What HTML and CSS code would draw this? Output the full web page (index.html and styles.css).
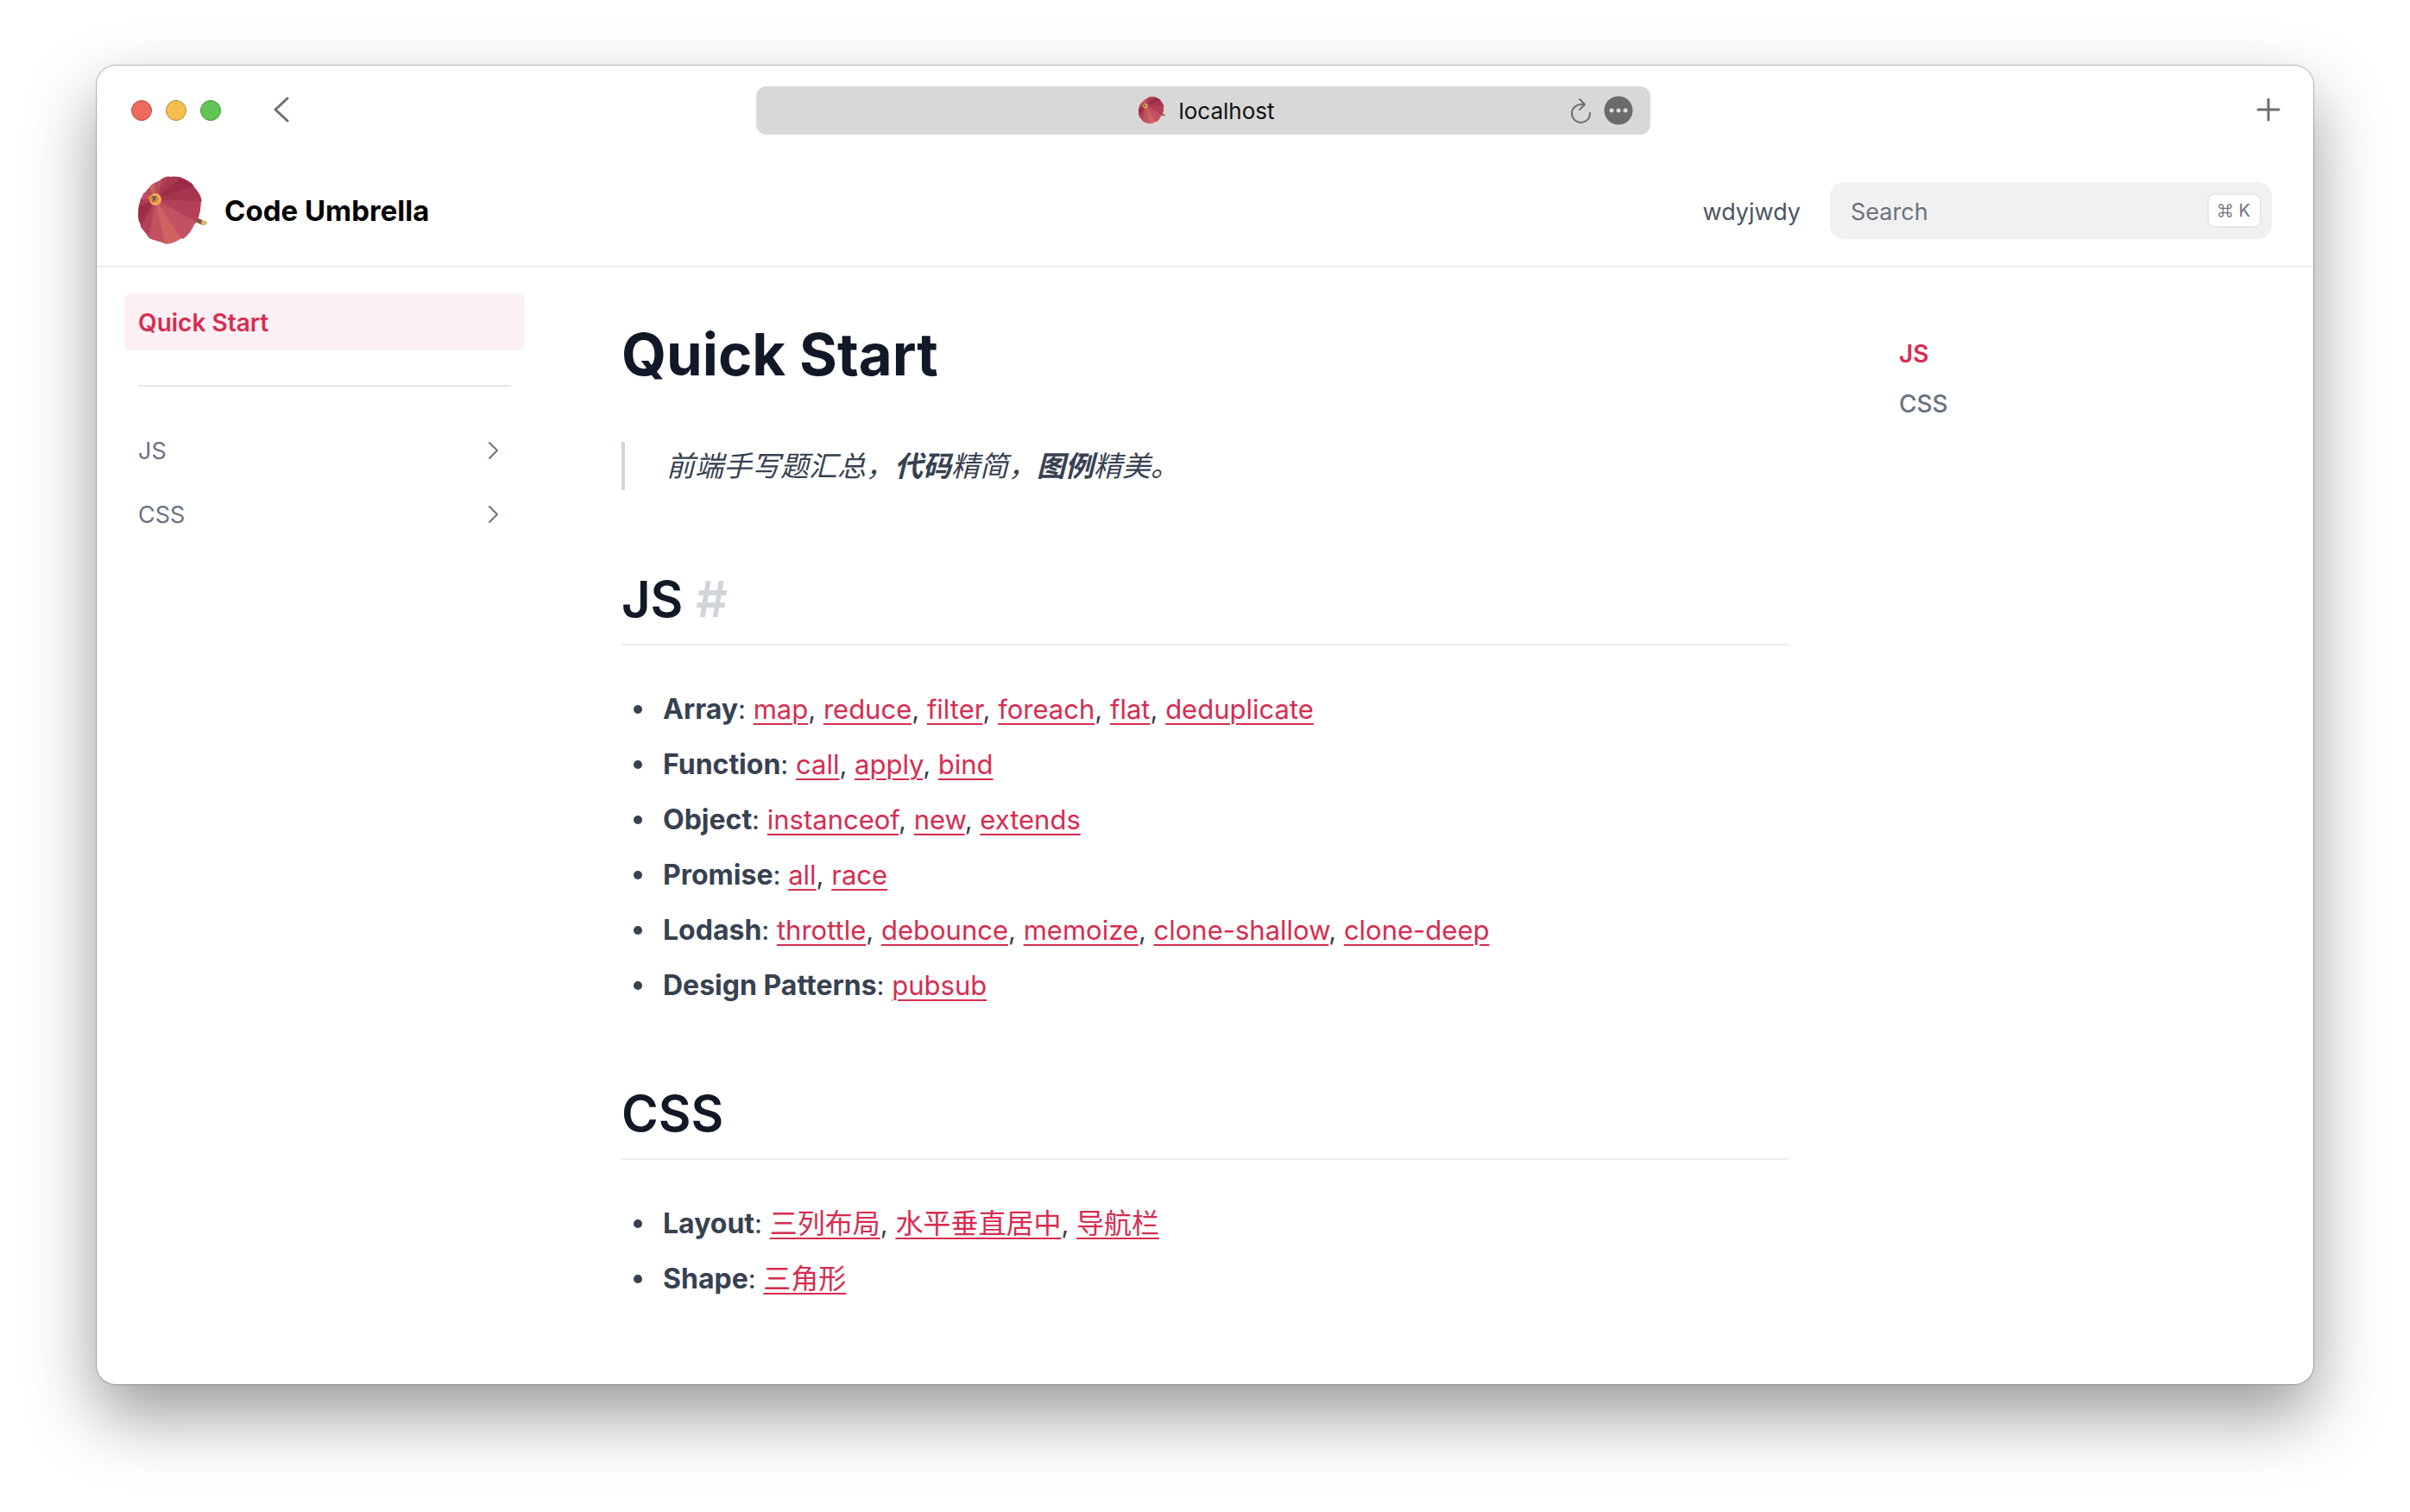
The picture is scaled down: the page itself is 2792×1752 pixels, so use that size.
FILE: index.html
```html
<!DOCTYPE html>
<html lang="en">
<head>
<meta charset="utf-8">
<meta name="viewport" content="width=device-width, initial-scale=1">
<title>Quick Start – Code Umbrella</title>
<link rel="stylesheet" href="styles.css">
</head>
<body>
<svg class="defs" aria-hidden="true">
  <symbol id="umbrella" viewBox="0 0 80 80">
    <path fill="#7b5640" d="M67 48l10 4-2 5-9-4z"/>
    <path fill="#d8bd67" d="M74 51l4 1q3 1 2 3t-3 2l-4-1z"/>
    <path fill="#b74a5c" d="M20 27L13 14 19 8 28 4 36 1 49 1 63 9 64 11 73 29 72 40 68 53 50 72 31 78 13 72 4 60 1 44 3 27 7 19z"/>
    <path fill="#c25162" d="M20 27L13 72q8 4 19 4z"/>
    <path fill="#d06262" d="M20 27l11 52q12-1 19-7z"/>
    <path fill="#c25162" d="M20 27l30 45 2 1q10-7 14-20l2-1z"/>
    <path fill="#b34056" d="M20 27l48 26q5-11 4-25z"/>
    <path fill="#a6364c" d="M20 27l54 2q-2-10-11-18z"/>
    <path fill="#9c2b48" d="M20 27l44-16q-6-7-16-9z"/>
    <path fill="#a8384e" d="M20 27L49 3l-1-2Q41 0 35 1z"/>
    <path fill="#b03f54" d="M20 27L36 0q-6 1-10 4z"/>
    <path fill="#bb4c5c" d="M20 27l8-23q-5 2-9 5z"/>
    <path fill="#cb6062" d="M20 27l-1-19q-5 2-7 7z"/>
    <path fill="#b74a5c" d="M20 27l-7-13-2 1-4 6z"/>
    <path fill="#c05063" d="M20 27L7 19l-2 5-3 4z"/>
    <path fill="#ae3c55" d="M20 27L3 27q-2 5-3 12z"/>
    <path fill="#9c2b48" d="M20 27L1 35q-2 10 0 18z"/>
    <path fill="#a3304b" d="M20 27L1 52l3 8z"/>
    <path fill="#b24056" d="M20 27L3 59q4 5 10 8z"/>
    <circle fill="#f0ad54" cx="20" cy="27" r="7"/>
    <circle fill="#de8a38" cx="20" cy="27" r="4"/>
    <path fill="#de8a38" d="M12 24q2-3 6-1l2 6q-5 3-8-2z"/>
    <path fill="#615d68" d="M16 23h5l-1 5-4 2q2-4 0-7z"/>
  </symbol>
  <symbol id="chevron" viewBox="0 0 24 24">
    <path d="M7 3l9 9-9 9" fill="none" stroke="currentColor" stroke-width="2" stroke-linecap="round" stroke-linejoin="round"/>
  </symbol>
</svg>

<div class="window">
  <div class="toolbar">
    <div class="toolbar-side">
      <div class="lights">
        <button class="light light-close" type="button" aria-label="Close"></button>
        <button class="light light-minimize" type="button" aria-label="Minimize"></button>
        <button class="light light-zoom" type="button" aria-label="Zoom"></button>
      </div>
      <button class="icon-button" type="button" aria-label="Back">
        <svg width="20" height="32" viewBox="0 0 20 32"><path d="M17 2L3 15l14 13" fill="none" stroke="currentColor" stroke-width="3" stroke-linecap="round" stroke-linejoin="round"/></svg>
      </button>
    </div>
    <div class="address">
      <div class="address-site">
        <svg width="32" height="32"><use href="#umbrella"/></svg>
        <span>localhost</span>
      </div>
      <div class="address-actions">
        <button class="icon-button" type="button" aria-label="Reload">
          <svg width="26" height="34" viewBox="0 0 26 34"><path d="M12 4l6 6-6 6M18 10h-4a10.500 10.500 0 1 0 10 10" fill="none" stroke="currentColor" stroke-width="2" stroke-linecap="round" stroke-linejoin="round"/></svg>
        </button>
        <button class="icon-button" type="button" aria-label="Page menu">
          <svg width="34" height="34" viewBox="0 0 34 34"><circle cx="17" cy="17" r="16.500" fill="#6b6b6b"/><g fill="#dcdcdc"><circle cx="9" cy="17" r="2.500"/><circle cx="17" cy="17" r="2.500"/><circle cx="25" cy="17" r="2.500"/></g></svg>
        </button>
      </div>
    </div>
    <div class="toolbar-side toolbar-end">
      <button class="icon-button" type="button" aria-label="New tab">
        <svg width="28" height="28" viewBox="0 0 28 28"><path d="M14 1v24M2 13h24" fill="none" stroke="currentColor" stroke-width="3" stroke-linecap="round"/></svg>
      </button>
    </div>
  </div>

  <header class="header">
    <a class="brand" href="#top">
      <svg width="80" height="80"><use href="#umbrella"/></svg>
      <span>Code Umbrella</span>
    </a>
    <a class="header-link" href="#author">wdyjwdy</a>
    <div class="search">
      <input class="search-input" type="search" placeholder="Search" aria-label="Search">
      <kbd class="search-key"><svg width="16" height="16" viewBox="0 0 18 18"><path d="M6 6h6v6H6zM6 6H4a2.500 2.500 0 1 1 2-2zM12 6V4a2.500 2.500 0 1 1 2 2zM12 12h2a2.500 2.500 0 1 1-2 2zM6 12v2a2.500 2.500 0 1 1-2-2z" fill="none" stroke="currentColor" stroke-width="1.500"/></svg>K</kbd>
    </div>
  </header>

  <div class="page">
    <nav class="sidebar" aria-label="Pages">
      <a class="side-link side-link-active" href="#top">Quick Start</a>
      <hr class="side-rule">
      <button class="side-link" type="button">JS<svg width="24" height="24"><use href="#chevron"/></svg></button>
      <button class="side-link" type="button">CSS<svg width="24" height="24"><use href="#chevron"/></svg></button>
    </nav>

    <main class="content" id="top">
      <h1>Quick Start</h1>
      <blockquote lang="zh-CN">前端手写题汇总，<strong>代码</strong>精简，<strong>图例</strong>精美。</blockquote>

      <h2 id="js">JS <a class="anchor" href="#js">#</a></h2>
      <ul>
        <li><strong>Array</strong>: <a href="#map">map</a>, <a href="#reduce">reduce</a>, <a href="#filter">filter</a>, <a href="#foreach">foreach</a>, <a href="#flat">flat</a>, <a href="#deduplicate">deduplicate</a></li>
        <li><strong>Function</strong>: <a href="#call">call</a>, <a href="#apply">apply</a>, <a href="#bind">bind</a></li>
        <li><strong>Object</strong>: <a href="#instanceof">instanceof</a>, <a href="#new">new</a>, <a href="#extends">extends</a></li>
        <li><strong>Promise</strong>: <a href="#all">all</a>, <a href="#race">race</a></li>
        <li><strong>Lodash</strong>: <a href="#throttle">throttle</a>, <a href="#debounce">debounce</a>, <a href="#memoize">memoize</a>, <a href="#clone-shallow">clone-shallow</a>, <a href="#clone-deep">clone-deep</a></li>
        <li><strong>Design Patterns</strong>: <a href="#pubsub">pubsub</a></li>
      </ul>

      <h2 id="css">CSS</h2>
      <ul>
        <li><strong>Layout</strong>: <a href="#columns" lang="zh-CN">三列布局</a>, <a href="#center" lang="zh-CN">水平垂直居中</a>, <a href="#navbar" lang="zh-CN">导航栏</a></li>
        <li><strong>Shape</strong>: <a href="#triangle" lang="zh-CN">三角形</a></li>
      </ul>
    </main>

    <nav class="toc" aria-label="On this page">
      <a class="toc-link toc-link-active" href="#js">JS</a>
      <a class="toc-link" href="#css">CSS</a>
    </nav>
  </div>
</div>
</body>
</html>
```
FILE: styles.css
```css
* {
  box-sizing: border-box;
}

body {
  margin: 0;
  min-height: 100vh;
  padding: 76px 112px 148px;
  display: flex;
  background: #fff;
  color: #374151;
  font-family: Inter, "Noto Sans CJK SC", sans-serif;
  font-size: 27px;
}

a {
  color: inherit;
  text-decoration: none;
}

button {
  border: 0;
  padding: 0;
  background: none;
  color: inherit;
  font: inherit;
  cursor: pointer;
}

svg {
  display: block;
  flex: none;
}

.defs {
  position: absolute;
  width: 0;
  height: 0;
}

.window {
  flex: 1;
  display: flex;
  flex-direction: column;
  min-width: 0;
  border-radius: 22px;
  background: #fff;
  box-shadow: 0 0 0 1px rgba(0, 0, 0, 0.24), 0 36px 80px rgba(0, 0, 0, 0.4);
}

/* Browser toolbar */

.toolbar {
  display: flex;
  align-items: center;
  height: 104px;
  padding: 0 38px 0 40px;
}

.toolbar-side {
  flex: 1;
  display: flex;
  align-items: center;
  gap: 60px;
}

.toolbar-end {
  justify-content: flex-end;
}

.lights {
  display: flex;
  gap: 16px;
}

.light {
  width: 24px;
  height: 24px;
  border: 1px solid;
  border-radius: 50%;
}

.light-close {
  background: #ec6a5e;
  border-color: #b84a40;
}

.light-minimize {
  background: #f4bf4f;
  border-color: #b78b35;
}

.light-zoom {
  background: #61c554;
  border-color: #459239;
}

.icon-button {
  color: #6f6f6f;
}

.address {
  flex: 0 1 1036px;
  display: grid;
  grid-template-columns: 1fr auto 1fr;
  align-items: center;
  height: 56px;
  margin-right: 6px;
  padding: 0 20px 0 28px;
  border-radius: 12px;
  background: #d8d8d8;
  color: #111;
  font-size: 26px;
}

.address-site {
  grid-column: 2;
  display: flex;
  align-items: center;
  gap: 14px;
}

.address-actions {
  display: flex;
  align-items: center;
  justify-content: flex-end;
  gap: 14px;
}

/* Site header */

.header {
  display: flex;
  align-items: center;
  height: 130px;
  padding: 0 48px;
  border-bottom: 2px solid #ececec;
}

.brand {
  flex: 1;
  display: flex;
  align-items: center;
  gap: 20px;
  color: #000;
  font-size: 33px;
  font-weight: 700;
}

.header-link {
  margin-right: 34px;
  padding-top: 2px;
  color: #4b5563;
}

.search {
  display: flex;
  align-items: center;
  width: 512px;
  height: 66px;
  padding: 0 12px 0 24px;
  border-radius: 16px;
  background: #f1f1f1;
}

.search-input {
  flex: 1;
  min-width: 0;
  border: 0;
  padding: 2px 0 0;
  background: none;
  font: inherit;
  color: #374151;
}

.search-input::placeholder {
  color: #6b7280;
  opacity: 1;
}

.search-key {
  display: flex;
  align-items: center;
  gap: 8px;
  height: 40px;
  padding: 0 11px;
  border: 2px solid #e5e7eb;
  border-radius: 8px;
  background: #fff;
  color: #6b7280;
  font-family: inherit;
  font-size: 20px;
}

/* Page body */

.page {
  display: flex;
}

.sidebar {
  flex: none;
  display: flex;
  flex-direction: column;
  gap: 8px;
  width: 528px;
  padding: 30px 32px;
}

.side-link {
  display: flex;
  align-items: center;
  justify-content: space-between;
  height: 66px;
  padding: 2px 24px 0 16px;
  border-radius: 8px;
  color: #6b7280;
}

.side-link-active {
  background: #fdf0f4;
  color: #d62d50;
  font-size: 28px;
  font-weight: 600;
}

.side-rule {
  align-self: stretch;
  height: 2px;
  margin: 32px 16px;
  border: 0;
  background: #e5e7eb;
}

.content {
  flex: 1;
  max-width: 1432px;
  min-width: 0;
  padding: 56px 0 64px 80px;
  font-size: 31px;
  line-height: 56px;
}

.content li strong {
  font-size: 32px;
}

h1,
h2 {
  margin: 0;
  color: #111827;
}

h1 {
  font-size: 67px;
  font-weight: 700;
  line-height: 90px;
}

h2 {
  margin-top: 84px;
  padding-bottom: 16px;
  border-bottom: 2px solid #ececec;
  font-size: 58px;
  font-weight: 600;
  line-height: 72px;
}

.anchor {
  color: #d1d5db;
}

blockquote {
  margin: 56px 0 90px;
  padding-left: 48px;
  border-left: 4px solid #d1d5db;
  font-size: 33px;
  font-style: italic;
}

ul {
  display: grid;
  gap: 8px;
  margin: 46px 0 0;
  padding-left: 14px;
  list-style: none;
}

.content li {
  height: 56px;
}

.content li::before {
  content: "";
  display: inline-block;
  width: 10px;
  height: 10px;
  margin-right: 24px;
  border-radius: 50%;
  background: #374151;
  vertical-align: 6px;
}

.content li a {
  color: #d62d50;
  text-decoration: underline;
  text-decoration-thickness: 2px;
  text-underline-position: from-font;
}

.content li a:lang(zh) {
  font-size: 32px;
}

.toc {
  flex: none;
  display: flex;
  flex-direction: column;
  gap: 18px;
  padding: 80px 0 0 128px;
  color: #6b7280;
  font-size: 28px;
  font-weight: 500;
  line-height: 40px;
}

.toc-link-active {
  color: #d62d50;
  font-weight: 600;
}
```
